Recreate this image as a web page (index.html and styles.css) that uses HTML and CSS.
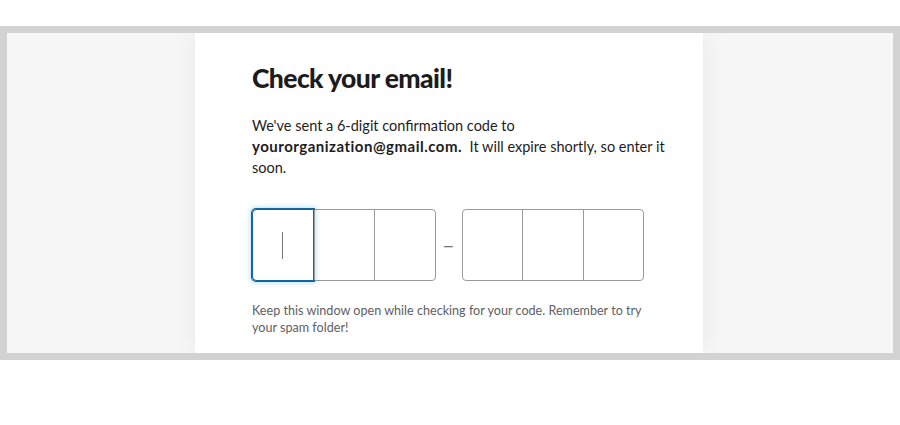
FILE: index.html
```html
<!DOCTYPE html>
<html lang="en">
<head>
    <meta charset="UTF-8">
    <title>Check your email</title>
    <link rel="stylesheet" href="styles.css">
</head>
<body>
    <div class="frame">
        <div class="card">
            <h1>Check your email!</h1>
            <p class="lead">We've sent a 6-digit confirmation code to <b>yourorganization@gmail.com.</b>&nbsp; It will expire shortly, so enter it soon.</p>

            <div class="code-row">
                <div class="code-group">
                    <div class="digit focused"><span class="caret"></span></div>
                    <div class="digit"></div>
                    <div class="digit"></div>
                </div>
                <span class="dash">&ndash;</span>
                <div class="code-group">
                    <div class="digit"></div>
                    <div class="digit"></div>
                    <div class="digit"></div>
                </div>
            </div>

            <p class="hint">Keep this window open while checking for your code. Remember to try your spam folder!</p>
        </div>
    </div>
</body>
</html>
```

FILE: styles.css
```css
body {
    margin: 0;
    padding-top: 26px;
    background-color: #fff;
    font-family: Lato, "Liberation Sans", sans-serif;
    color: #1d1c1d;
}
.frame {
    height: 320px;
    border: 7px solid #d2d2d2;
    background-color: #f7f7f7;
    display: flex;
    justify-content: center;
    overflow: hidden;
}
.card {
    width: 451px;
    margin-right: 2px;
    padding: 27px 0 0 57px;
    background-color: #fff;
    box-shadow: 0 0 28px rgba(0,0,0,0.07);
}
h1 {
    margin: 0;
    font-size: 26.5px;
    font-weight: 900;
    letter-spacing: -0.6px;
    line-height: 36px;
}
.lead {
    margin: 19px 0 0;
    width: 420px;
    font-size: 14.5px;
    line-height: 21px;
}
.lead b {
    font-size: 15px;
    font-weight: 700;
    letter-spacing: 0.5px;
}
.code-row {
    margin-top: 31px;
    display: flex;
    align-items: center;
}
.code-group {
    display: flex;
    border: 1px solid #9a9a9a;
    border-radius: 4px;
}
.digit {
    width: 59.5px;
    height: 70px;
    border-left: 1px solid #9a9a9a;
    display: flex;
    align-items: center;
    justify-content: center;
}
.digit:first-child {
    border-left: none;
}
.digit.focused {
    margin: -1px 0 -1px -1px;
    border: 1px solid #1264a3;
    border-radius: 4px 0 0 4px;
    box-shadow: 0 0 0 1px #1264a3, 0 0 5px 2px rgba(29,155,209,0.3);
}
.caret {
    width: 1px;
    height: 27px;
    background-color: #777;
}
.dash {
    width: 26px;
    text-align: center;
    color: #777;
    font-size: 22px;
    line-height: 1;
}
.hint {
    margin: 21px 0 0;
    width: 395px;
    font-size: 12.6px;
    line-height: 17px;
    color: #616061;
}
```
